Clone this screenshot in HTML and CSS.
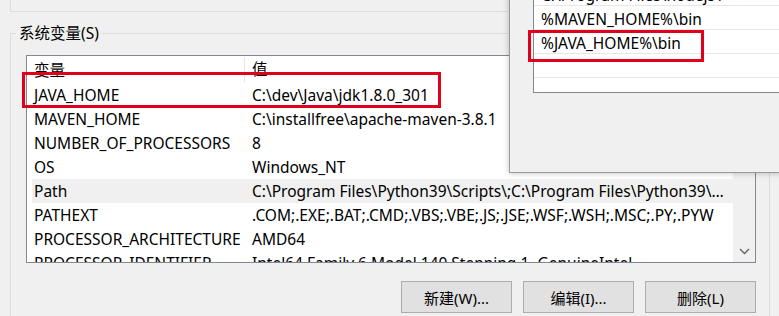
FILE: index.html
```html
<!DOCTYPE html>
<html>
<head>
    <meta charset="utf-8">
    <title>环境变量</title>
    <link rel="stylesheet" href="styles.css">
</head>
<body>
    <div class="window">
        <div class="group-user"></div>

        <fieldset class="group-system">
            <legend>系统变量(S)</legend>
            <div class="listview">
                <div class="lv-body">
                    <div class="lv-head">
                        <div class="col-name">变量</div>
                        <div class="col-value">值</div>
                    </div>
                    <div class="lv-row">
                        <div class="col-name">JAVA_HOME</div>
                        <div class="col-value">C:\dev\Java\jdk1.8.0_301</div>
                    </div>
                    <div class="lv-row">
                        <div class="col-name">MAVEN_HOME</div>
                        <div class="col-value">C:\installfree\apache-maven-3.8.1</div>
                    </div>
                    <div class="lv-row">
                        <div class="col-name">NUMBER_OF_PROCESSORS</div>
                        <div class="col-value">8</div>
                    </div>
                    <div class="lv-row">
                        <div class="col-name">OS</div>
                        <div class="col-value">Windows_NT</div>
                    </div>
                    <div class="lv-row selected">
                        <div class="col-name">Path</div>
                        <div class="col-value">C:\Program Files\Python39\Scripts\;C:\Program Files\Python39\;C:\Windows\system32;C:\Windows</div>
                    </div>
                    <div class="lv-row">
                        <div class="col-name">PATHEXT</div>
                        <div class="col-value">.COM;.EXE;.BAT;.CMD;.VBS;.VBE;.JS;.JSE;.WSF;.WSH;.MSC;.PY;.PYW</div>
                    </div>
                    <div class="lv-row">
                        <div class="col-name">PROCESSOR_ARCHITECTURE</div>
                        <div class="col-value">AMD64</div>
                    </div>
                    <div class="lv-row">
                        <div class="col-name">PROCESSOR_IDENTIFIER</div>
                        <div class="col-value">Intel64 Family 6 Model 140 Stepping 1, GenuineIntel</div>
                    </div>
                </div>
                <div class="scrollbar">
                    <svg class="chevron" width="11" height="7" viewBox="0 0 11 7">
                        <path d="M1 1 L5.5 5.5 L10 1" fill="none" stroke="#606060" stroke-width="1.3"/>
                    </svg>
                </div>
            </div>

            <div class="btn-row">
                <button class="btn">新建(W)...</button>
                <button class="btn">编辑(I)...</button>
                <button class="btn">删除(L)</button>
            </div>
        </fieldset>

        <!-- 红框标注 -->
        <div class="mark mark-java"></div>
    </div>

    <!-- 编辑环境变量 对话框 -->
    <div class="dialog">
        <div class="path-list">
            <div class="path-item">C:\Program Files\nodejs\</div>
            <div class="path-item">%MAVEN_HOME%\bin</div>
            <div class="path-item">%JAVA_HOME%\bin</div>
            <div class="path-item"></div>
            <div class="path-item"></div>
        </div>
        <div class="mark mark-path"></div>
    </div>
</body>
</html>
```

FILE: styles.css
```css
body, html {
    margin: 0;
    height: 100%;
    background-color: #f0f0f0;
    font-family: "Noto Sans", "Noto Sans CJK SC", sans-serif;
    font-size: 15.5px;
    color: #000;
    overflow: hidden;
}

.window {
    position: relative;
    padding: 0 9px 0 10px;
}

/* 用户变量分组框的下边 */
.group-user {
    height: 11px;
    border-left: 1px solid #dcdcdc;
    border-bottom: 1px solid #dcdcdc;
}

.group-system {
    margin: 11px 0 0 0;
    padding: 12px 13px 40px 15px;
    border: 1px solid #dcdcdc;
    border-bottom: none;
    min-width: 0;
}

.group-system legend {
    margin-left: -10px;
    padding: 0 3px;
    line-height: 20px;
}

.listview {
    height: 208px;
    box-sizing: border-box;
    border: 1px solid #828790;
    background: #fff;
    display: flex;
    overflow: hidden;
}

.lv-body {
    flex: 1;
    min-width: 0;
    padding-left: 5px;
}

.lv-head, .lv-row {
    display: grid;
    grid-template-columns: 212px 1fr;
    white-space: nowrap;
}

.lv-head {
    height: 27px;
    align-items: center;
}

.lv-head .col-value {
    border-left: 1px solid #e5e5e5;
    height: 25px;
    line-height: 25px;
    padding-left: 7px;
}

.lv-row {
    height: 24px;
    line-height: 24px;
}

.lv-row.selected {
    background-color: #f0f0f0;
}

.col-name {
    padding-left: 2px;
    overflow: hidden;
}

.col-value {
    padding-left: 8px;
    overflow: hidden;
    text-overflow: ellipsis;
    padding-right: 8px;
}

.scrollbar {
    width: 22px;
    background-color: #f0f0f0;
    display: flex;
    align-items: flex-end;
    justify-content: center;
    padding-bottom: 7px;
    box-sizing: border-box;
}

.btn-row {
    display: flex;
    justify-content: flex-end;
    gap: 11px;
    margin-top: 18px;
}

.btn {
    width: 111px;
    height: 32px;
    background-color: #e1e1e1;
    border: 1px solid #adadad;
    font-family: "Noto Sans", "Noto Sans CJK SC", sans-serif;
    font-size: 15px;
    color: #000;
    padding: 0;
}

.dialog {
    position: absolute;
    left: 509px;
    top: -19px;
    right: -30px;
    height: 192px;
    box-sizing: border-box;
    background-color: #f0f0f0;
    border: 1px solid #9a9a9a;
    box-shadow: 0 0 6px rgba(0, 0, 0, 0.25);
    padding: 0 0 0 23px;
}

.path-list {
    height: 111px;
    box-sizing: border-box;
    border: 1px solid #828790;
    border-top: none;
    background: #fff;
    overflow: hidden;
}

.path-item {
    height: 21px;
    line-height: 23px;
    padding-top: 2px;
    border-bottom: 1px solid #e6e6e6;
    padding-left: 7px;
    white-space: nowrap;
}

.mark {
    position: absolute;
    border: 3px solid #e0001b;
    box-sizing: border-box;
}

.mark-java {
    left: 22px;
    top: 72px;
    width: 419px;
    height: 36px;
}

.mark-path {
    left: 18px;
    top: 48px;
    width: 176px;
    height: 32px;
}
```
